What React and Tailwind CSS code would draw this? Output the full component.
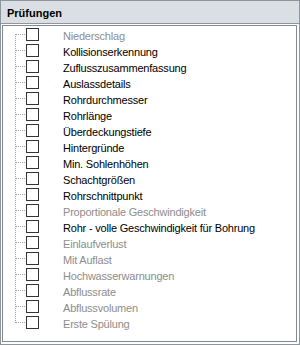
import React from "react";

const items = [
  ["Niederschlag", false],
  ["Kollisionserkennung", true],
  ["Zuflusszusammenfassung", true],
  ["Auslassdetails", true],
  ["Rohrdurchmesser", true],
  ["Rohrlänge", true],
  ["Überdeckungstiefe", true],
  ["Hintergründe", true],
  ["Min. Sohlenhöhen", true],
  ["Schachtgrößen", true],
  ["Rohrschnittpunkt", true],
  ["Proportionale Geschwindigkeit", false],
  ["Rohr - volle Geschwindigkeit für Bohrung", true],
  ["Einlaufverlust", false],
  ["Mit Auflast", false],
  ["Hochwasserwarnungen", false],
  ["Abflussrate", false],
  ["Abflussvolumen", false],
  ["Erste Spülung", false],
];

function TreeLines({ first, last }) {
  const y1 = first ? 8 : 0;
  const y2 = last ? 9 : 16;
  return (
    <svg width="23" height="16" className="shrink-0" shapeRendering="crispEdges">
      <line x1="12.5" y1={y1} x2="12.5" y2={y2} stroke="#a0a0a0" strokeWidth="1" strokeDasharray="1 1" />
      <line x1="13" y1="8.5" x2="23" y2="8.5" stroke="#a0a0a0" strokeWidth="1" strokeDasharray="1 1" />
    </svg>
  );
}

export default function App() {
  return (
    <div
      className="w-[300px] h-[345px] border border-[#8e959c] bg-white flex flex-col"
      style={{ fontFamily: '"Liberation Sans", Arial, sans-serif' }}
    >
      <div className="h-[22px] shrink-0 bg-[#dadfe3] border-b border-[#8e959c] box-content pl-[6px] pt-0">
        <div className="pt-[4px] leading-[16px] text-[11px] font-bold text-black">Prüfungen</div>
      </div>
      <div className="flex-1 pt-[1px] pl-[1px] pr-[2px] pb-[2px] flex">
        <div className="flex-1 border border-[#838992] pt-0 flex flex-col">
          {items.map(([label, active], i) => (
            <div key={i} className="h-[16px] flex items-start">
              <TreeLines first={i === 0} last={i === items.length - 1} />
              <div className="mt-[2px] w-[13px] h-[13px] border border-[#333333] bg-white shrink-0" />
              <div
                className={
                  "ml-[24px] pt-[2px] text-[11px] leading-[16px] tracking-[-0.2px] whitespace-nowrap " +
                  (active ? "text-black" : "text-[#8d8d8d]")
                }
              >
                {label}
              </div>
            </div>
          ))}
        </div>
      </div>
    </div>
  );
}
